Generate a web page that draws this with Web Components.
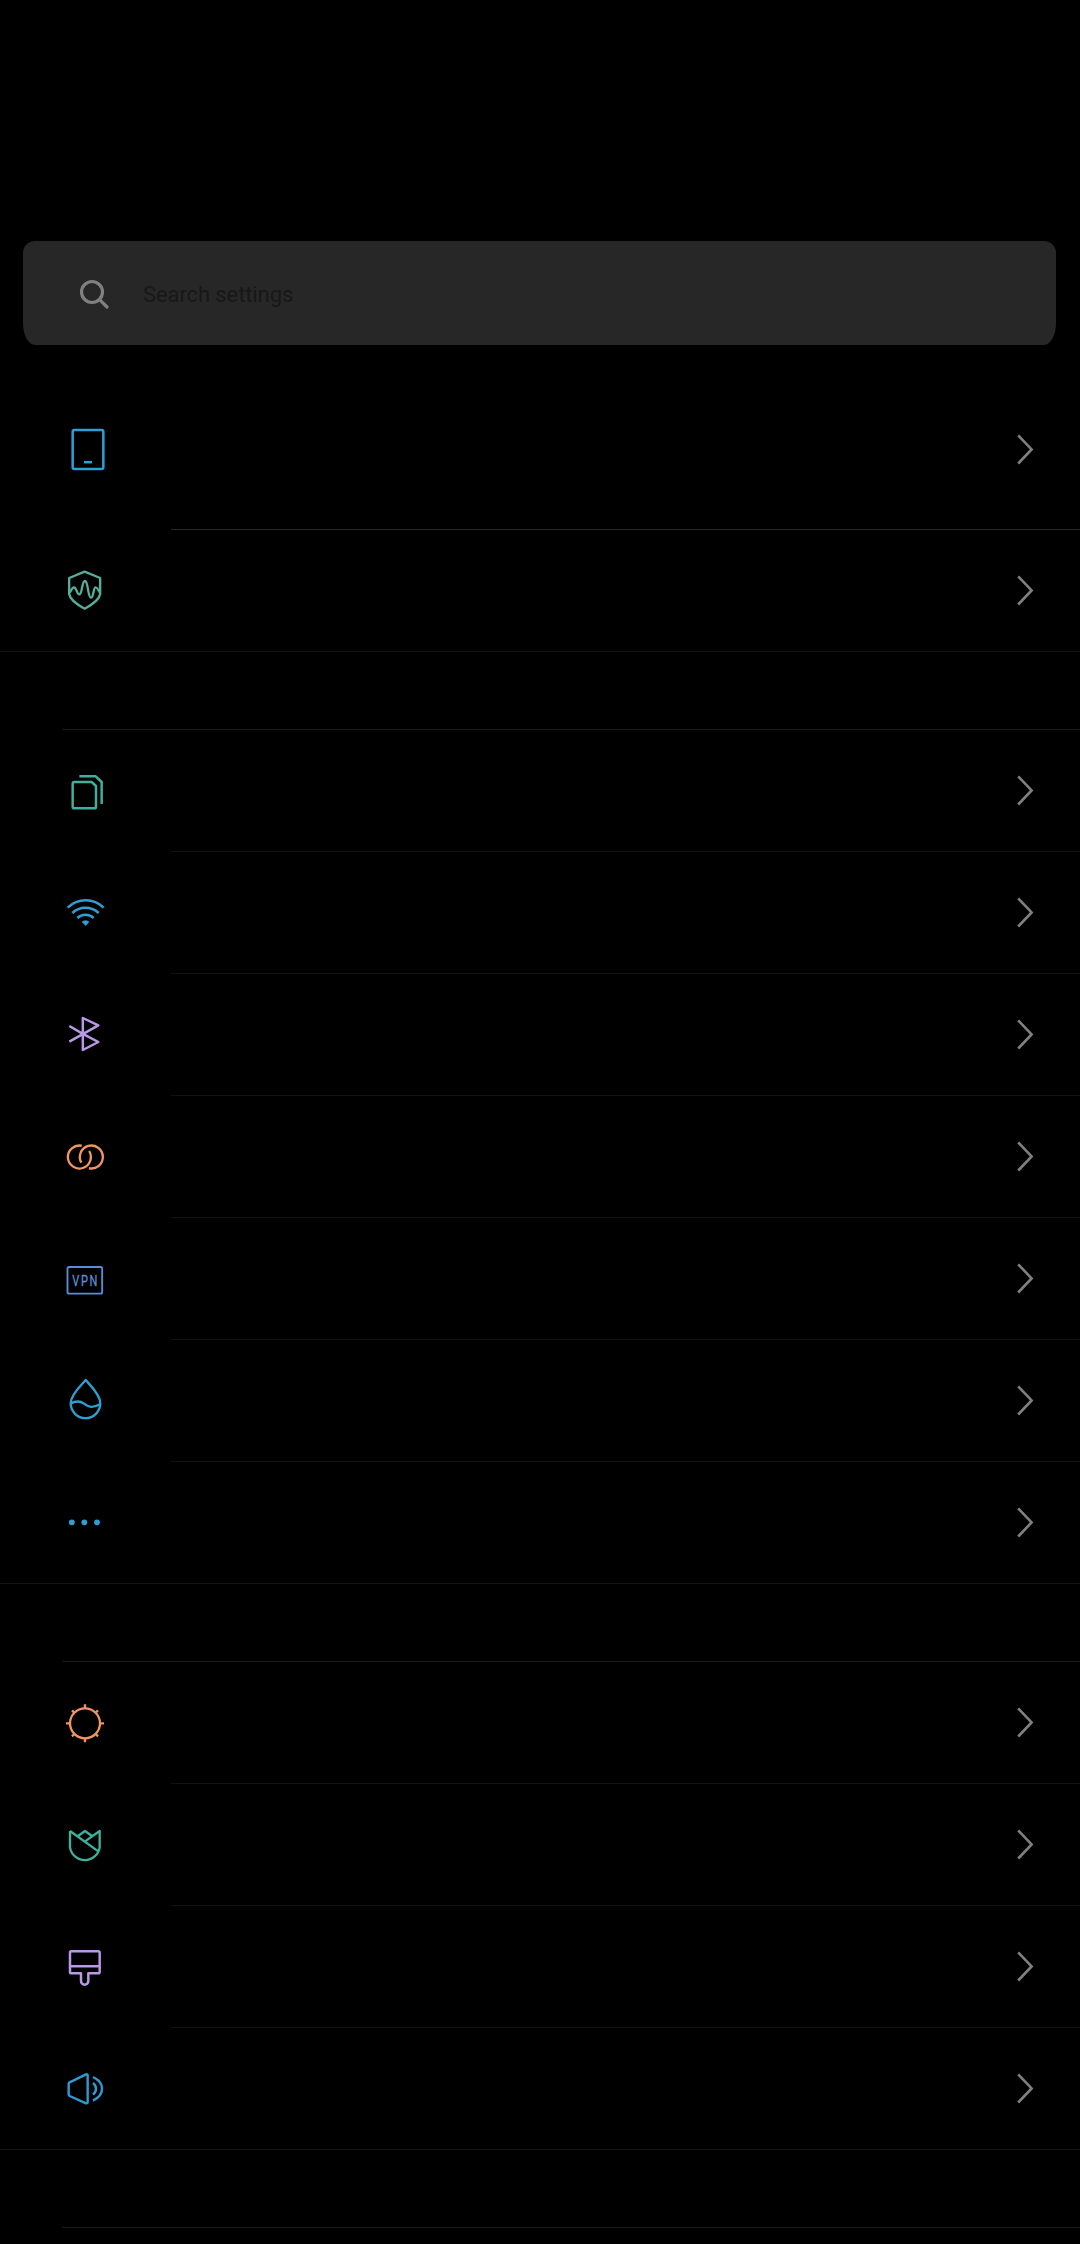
<!DOCTYPE html>
<html lang="en">
<head>
<meta charset="utf-8">
<title>Settings</title>
<style>
html,body{margin:0;background:#000;height:2244px;overflow:hidden}
</style>
</head>
<body>
<settings-page></settings-page>
<script>
const ICONS = {
  phone: ['#309dd3', 7.6, '<rect x="50" y="36" width="92" height="117" rx="5"/><path d="M84 132.500H108"/>'],
  shield: ['#56ad98', 7, '<path d="M86 35L132.500 54V102Q130 122 86 146Q42 122 39.500 102V54Z"/><path d="M41 98C46 90 49 82 54 82C62 82 62 103 70 103C79 103 77 63 87 63C97 63 95 113 105 113C114 113 111 82 119 82C125 82 127 91 132 98"/>'],
  sim: ['#3fb09b', 7.4, '<path d="M55 66H107L120 78V140Q120 145 115 145H55Q50 145 50 140V71Q50 66 55 66Z"/><path d="M70 49H119L137 66V132"/>'],
  wifi: ['#309dd3', 7.6, '<path d="M35 77A77 77 0 0 1 143 77M49 93A58 58 0 0 1 128 93M64 108A35 35 0 0 1 113 108"/><path fill="currentColor" stroke="none" d="M77 119Q88.500 110 100 119L89 132Z"/>'],
  bluetooth: ['#ba98e8', 7.4, '<path d="M40 66L80.500 89.500L127 114L80.500 138V42L127 64L40 113"/>'],
  rings: ['#f39461', 7, '<path d="M99.500 75A34.500 34.500 0 1 1 77 59.200M76 110A34.500 34.500 0 1 1 99 126.800"/>'],
  vpn: ['#5c8cd6', 5.6, '<rect x="34.500" y="57" width="104" height="80" rx="5"/><text font-size="46" letter-spacing="7" fill="currentColor" stroke="currentColor" stroke-width="1" font-family="Roboto, sans-serif" transform="translate(48.500 114) scale(.72 1)">VPN</text>'],
  drop: ['#2f9fd0', 7, '<path d="M89 30C75 46 44 74 44 100A44.500 44.500 0 0 0 133 100C133 74 103 46 89 30Z"/><path d="M44 100C56 94 72 92 84 101C98 112 110 115 132 103"/>'],
  dots: ['#309dd3', 0, '<g fill="currentColor"><circle cx="47.500" cy="91" r="8.800"/><circle cx="85" cy="91" r="8.800"/><circle cx="123" cy="91" r="8.800"/></g>'],
  sun: ['#f39461', 7, '<circle cx="87" cy="94" r="45"/><path d="M87 49V37M87 139V151M42 94H30M132 94H144M55 62L48 55M119 62L126 55M55 126L48 133M119 126L126 133"/>'],
  tulip: ['#3fb09b', 7, '<path d="M42 51V100A45 45 0 0 0 131 100V51L87 82M42 51L127 112M66 66L87 51L108 66"/>'],
  brush: ['#ba98e8', 7.4, '<path d="M46 46H127Q131 46 131 50V108Q131 112 127 112H97V135A11 11 0 0 1 75 135V112H46Q42 112 42 108V50Q42 46 46 46ZM42 91H131"/>'],
  sound: ['#2f9ad0', 7.2, '<path d="M41 73L90 49Q95 48 95 52V132Q95 137 90 136L41 114Q38 112 38 109V78Q38 75 41 73Z"/><path d="M111 75Q120 82 120 92T111 110M111 57Q138 70 138 92.500T111 128"/>']
};

class SettingsSearch extends HTMLElement {
  constructor() {
    super();
    this.attachShadow({mode: 'open'}).innerHTML = `
<style>
:host{display:flex;align-items:center;box-sizing:border-box;height:104px;margin:0 24px 0 23px;padding-left:54px;
background:#272727;border-radius:12px 12px 12px 12px / 12px 12px 22px 22px;color:#181818;font:22px/30px Roboto,sans-serif}
svg{display:block;width:36px;height:36px;margin-right:30px}
span{white-space:nowrap;letter-spacing:-.1px;padding-top:4px}
</style>
<svg viewBox="0 0 36 36" fill="none" stroke="#808080" stroke-width="3.200"><circle cx="15" cy="17" r="10.500"/><path stroke-linecap="round" d="M22.800 24.800L30 32"/></svg>
<span><slot></slot></span>`;
  }
}

class SettingsRow extends HTMLElement {
  constructor() {
    super();
    this.attachShadow({mode: 'open'});
  }
  connectedCallback() {
    const [color, width, shape] = ICONS[this.getAttribute('icon')];
    this.shadowRoot.innerHTML = `
<style>
:host{display:flex;height:122px}
:host([tall]){height:162px;--line:#262626}
.lead{flex:none;width:171px;display:flex;align-items:center;box-sizing:border-box;padding:0 0 1px 56px}
.lead svg{display:block;width:60px;height:61px;color:${color}}
.body{flex:1;display:flex;align-items:center;justify-content:flex-end;box-sizing:border-box;padding-right:44px;border-bottom:1px solid var(--line,#121212)}
.body svg{display:block;width:20px;height:33px}
:host([tall]) .body{padding-top:1px}
:host([last]){border-bottom:1px solid #141414;box-sizing:border-box}
:host([last]) .body{border:0}
:host([last]) .lead{padding-bottom:0}
</style>
<div class="lead"><svg viewBox="0 0 180 183" fill="none" stroke="currentColor" stroke-width="${width}" stroke-linejoin="round">${shape}</svg></div>
<div class="body"><svg viewBox="0 0 20 33" fill="none" stroke="#808080" stroke-width="2.600"><path d="M2.200 2.300L15.600 16.400L2.200 30.500"/></svg></div>`;
  }
}

class SettingsGroup extends HTMLElement {
  constructor() {
    super();
    this.attachShadow({mode: 'open'}).innerHTML = `
<style>
:host{display:flex;flex-direction:column;padding-top:77px}
:host([first]){padding-top:23px}
hr{border:0;height:1px;width:1018px;margin:0 0 0 auto;background:#1c1c1c}
:host([first]) hr{display:none}
</style><hr><slot></slot>`;
  }
}

class SettingsPage extends HTMLElement {
  constructor() {
    super();
    this.attachShadow({mode: 'open'}).innerHTML = `
<style>
:host{display:flex;flex-direction:column;box-sizing:border-box;width:1080px;height:2244px;padding-top:241px;overflow:hidden;background:#000}
</style>
<settings-search>Search settings</settings-search>
<settings-group first>
<settings-row icon="phone" tall></settings-row>
<settings-row icon="shield" last></settings-row>
</settings-group>
<settings-group>
<settings-row icon="sim"></settings-row>
<settings-row icon="wifi"></settings-row>
<settings-row icon="bluetooth"></settings-row>
<settings-row icon="rings"></settings-row>
<settings-row icon="vpn"></settings-row>
<settings-row icon="drop"></settings-row>
<settings-row icon="dots" last></settings-row>
</settings-group>
<settings-group>
<settings-row icon="sun"></settings-row>
<settings-row icon="tulip"></settings-row>
<settings-row icon="brush"></settings-row>
<settings-row icon="sound" last></settings-row>
</settings-group>
<settings-group></settings-group>`;
  }
}

customElements.define('settings-search', SettingsSearch);
customElements.define('settings-row', SettingsRow);
customElements.define('settings-group', SettingsGroup);
customElements.define('settings-page', SettingsPage);
</script>
</body>
</html>
